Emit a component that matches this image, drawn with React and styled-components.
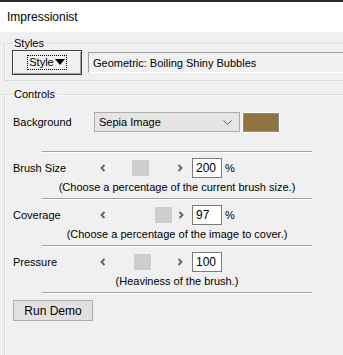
import React from 'react'
import styled, { createGlobalStyle } from 'styled-components'

const GlobalStyle = createGlobalStyle`
  html, body {
    margin: 0;
    padding: 0;
    background: #f0f0f0;
  }
  body {
    font-family: 'Liberation Sans', Arial, sans-serif;
    font-size: 11px;
    color: #000;
  }
`

const Window = styled.div`
  width: 343px;
  height: 355px;
  overflow: hidden;
  background: #f0f0f0;
  display: flex;
  flex-direction: column;
`

const TitleBar = styled.header`
  height: 30px;
  flex: none;
  border-top: 2px solid #2b2b2b;
  background: #fff;
  display: flex;
  align-items: center;
  padding-left: 7px;
  font-size: 12px;
  color: #000;
`

const GroupBox = styled.fieldset`
  margin: ${p => p.$top}px 0 0 4px;
  padding: 0;
  width: 420px;
  flex: none;
  min-height: ${p => p.$minHeight || 0}px;
  box-sizing: border-box;
  border: 1px solid #dcdcdc;
  box-shadow: inset 1px 1px 0 #fbfbfb;
`

const Legend = styled.legend`
  margin-left: 7px;
  padding: 0 2px;
  line-height: 13px;
  font-size: 11px;
`

const StylesBody = styled.div`
  display: flex;
  align-items: center;
  gap: 6px;
  padding: 0 0 5px 7px;
`

const StyleButton = styled.button`
  width: 70px;
  height: 25px;
  box-sizing: border-box;
  background: #f0f0f0;
  border: 1px solid #3c3c3c;
  box-shadow: inset 1px 1px 0 #fff, inset -1px -1px 0 #a0a0a0;
  font: inherit;
  display: flex;
  align-items: center;
  justify-content: center;
  padding: 0;
`

const FocusLabel = styled.span`
  outline: 1px dotted #000;
  padding: 0 1px;
  line-height: 13px;
  display: flex;
  align-items: center;
  gap: 1px;
`

const ReadOnlyField = styled.div`
  flex: 1;
  height: 21px;
  box-sizing: border-box;
  border-top: 1px solid #a0a0a0;
  border-left: 1px solid #a0a0a0;
  border-bottom: 1px solid #fff;
  border-right: 1px solid #fff;
  background: #f0f0f0;
  display: flex;
  align-items: center;
  padding-left: 4px;
`

const ControlsBody = styled.div`
  display: flex;
  flex-direction: column;
  padding: 11px 0 0 8px;
`

const Row = styled.div`
  display: flex;
  align-items: center;
  height: 20px;
  margin-top: ${p => p.$top || 0}px;
`

const Label = styled.span`
  width: 81px;
  flex: none;
`

const Select = styled.div`
  width: 146px;
  height: 20px;
  box-sizing: border-box;
  background: #e5e5e5;
  border: 1px solid #adadad;
  display: flex;
  align-items: center;
  justify-content: space-between;
  padding: 0 7px 0 4px;
`

const Swatch = styled.div`
  width: 36px;
  height: 19px;
  margin-left: 3px;
  box-sizing: border-box;
  background: ${p => p.$color};
  border: 1px solid #8a8a8a;
  box-shadow: 0 0 0 1px #fff;
`

const Separator = styled.div`
  width: 270px;
  margin-left: 29px;
  margin-top: ${p => p.$top}px;
  height: 0;
  border-top: 1px solid #a0a0a0;
  border-bottom: 1px solid #fff;
`

const Scroll = styled.div`
  width: 94px;
  height: 20px;
  display: flex;
  align-items: center;
  flex: none;
`

const Arrow = styled.span`
  width: 17px;
  height: 20px;
  display: flex;
  align-items: center;
  justify-content: center;
  flex: none;
`

const Trough = styled.div`
  flex: 1;
  height: 16px;
  display: flex;
`

const Thumb = styled.div`
  width: 17px;
  height: 16px;
  background: #cdcdcd;
  margin-left: ${p => p.$offset}px;
`

const NumberBox = styled.div`
  width: 30px;
  height: 20px;
  box-sizing: border-box;
  margin-left: 4px;
  background: #fff;
  border: 1px solid #7a7a7a;
  display: flex;
  align-items: center;
  padding-left: 3px;
  font-size: 12px;
`

const Unit = styled.span`
  margin-left: 3px;
`

const Caption = styled.div`
  width: 270px;
  margin-left: 29px;
  margin-top: 2px;
  line-height: 14px;
  text-align: center;
`

const RunButton = styled.button`
  width: 80px;
  height: 21px;
  margin-top: 6px;
  box-sizing: border-box;
  background: #e1e1e1;
  border: 1px solid #adadad;
  font: inherit;
  font-size: 12px;
  padding: 0;
`

const Chevron = ({ dir }) => (
  <svg width="6" height="8" viewBox="0 0 6 8">
    <path
      d={dir === 'left' ? 'M4.5 1 L1.5 4 L4.5 7' : 'M1.5 1 L4.5 4 L1.5 7'}
      fill="none"
      stroke="#606060"
      strokeWidth="1.8"
    />
  </svg>
)

const DownCaret = () => (
  <svg width="9" height="5" viewBox="0 0 9 5">
    <path d="M0.5 0.5 L4.5 4.5 L8.5 0.5" fill="none" stroke="#606060" strokeWidth="1" />
  </svg>
)

const controls = [
  { label: 'Brush Size', value: '200', unit: '%', offset: 21, hint: '(Choose a percentage of the current brush size.)' },
  { label: 'Coverage', value: '97', unit: '%', offset: 44, hint: '(Choose a percentage of the image to cover.)' },
  { label: 'Pressure', value: '100', unit: '', offset: 23, hint: '(Heaviness of the brush.)' },
]

function SliderControl({ label, value, unit, offset, hint }) {
  return (
    <>
      <Row $top={5}>
        <Label>{label}</Label>
        <Scroll>
          <Arrow><Chevron dir="left" /></Arrow>
          <Trough><Thumb $offset={offset} /></Trough>
          <Arrow><Chevron dir="right" /></Arrow>
        </Scroll>
        <NumberBox>{value}</NumberBox>
        {unit && <Unit>{unit}</Unit>}
      </Row>
      <Caption>{hint}</Caption>
      <Separator $top={4} />
    </>
  )
}

export default function App() {
  return (
    <Window>
      <GlobalStyle />
      <TitleBar>Impressionist</TitleBar>
      <GroupBox $top={5}>
        <Legend>Styles</Legend>
        <StylesBody>
          <StyleButton>
            <FocusLabel>
              Style
              <svg width="10" height="7" viewBox="0 0 10 7">
                <path d="M0 0 H10 L5 6 Z" fill="#000" />
              </svg>
            </FocusLabel>
          </StyleButton>
          <ReadOnlyField>Geometric: Boiling Shiny Bubbles</ReadOnlyField>
        </StylesBody>
      </GroupBox>
      <GroupBox $top={7} $minHeight={300}>
        <Legend>Controls</Legend>
        <ControlsBody>
          <Row>
            <Label>Background</Label>
            <Select>
              <span>Sepia Image</span>
              <DownCaret />
            </Select>
            <Swatch $color="#8f7341" />
          </Row>
          <Separator $top={19} />
          {controls.map(c => (
            <SliderControl key={c.label} {...c} />
          ))}
          <div>
            <RunButton>Run Demo</RunButton>
          </div>
        </ControlsBody>
      </GroupBox>
    </Window>
  )
}
